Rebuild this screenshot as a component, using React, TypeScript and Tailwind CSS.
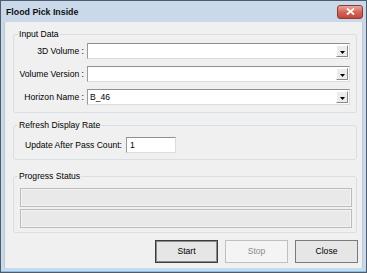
import React from 'react';

const font = { fontFamily: '"Liberation Sans", Arial, sans-serif' };

function ComboBox({ value }: { value?: string }) {
  return (
    <div className="flex h-[16px] flex-1 items-stretch border border-t-[#8e8f8f] border-l-[#9a9a9a] border-r-[#dcdcdc] border-b-[#dcdcdc] bg-white">
      <div className="flex flex-1 items-center pl-[2px] text-[8.6px] leading-none text-black">{value}</div>
      <div className="my-[1px] mr-[1px] flex w-[12px] items-center justify-center border border-t-white border-l-white border-r-[#8a8a8a] border-b-[#8a8a8a] bg-[#ececec]">
        <svg width="5" height="3" viewBox="0 0 5 3" className="mt-[2px]">
          <path d="M0 0h5L2.5 3z" fill="#000" />
        </svg>
      </div>
    </div>
  );
}

function Group({ title, className, children }: { title: string; className?: string; children: React.ReactNode }) {
  return (
    <fieldset className={`mr-[5px] ml-[8px] rounded-[3px] border border-[#d5dfe5] ${className ?? ''}`}>
      <legend className="ml-[4px] px-[1px] text-[8.6px] leading-[11px] text-black">{title}</legend>
      {children}
    </fieldset>
  );
}

function Field({ label, value }: { label: string; value?: string }) {
  return (
    <div className="flex items-center pr-[6px]">
      <div className="w-[70px] text-right text-[8.6px] leading-none whitespace-nowrap text-black">{label}</div>
      <div className="ml-[3px] flex flex-1">
        <ComboBox value={value} />
      </div>
    </div>
  );
}

function Button({ label, disabled, primary }: { label: string; disabled?: boolean; primary?: boolean }) {
  const border = primary
    ? 'border-[#3c3c3c] shadow-[inset_0_0_0_1px_#8a8a8a]'
    : disabled
      ? 'border-[#bfbfbf]'
      : 'border-[#7a7a7a]';
  return (
    <button
      disabled={disabled}
      className={`flex h-[23px] w-[63px] items-center justify-center border text-[8.6px] ${border} ${
        disabled ? 'bg-[#f4f4f4] text-[#8d8d8d]' : 'bg-[#e6e6e6] text-black'
      }`}
    >
      {label}
    </button>
  );
}

export default function App() {
  return (
    <div style={font} className="flex h-[273px] w-[367px] flex-col border border-[#4e5c6c] bg-[#c9d9ea]">
      {/* title bar */}
      <div className="flex h-[21px] items-center justify-between pl-[5px] pr-[3px]">
        <span className="pt-[2px] text-[8.8px] font-bold text-[#111]">Flood Pick Inside</span>
        <div className="flex h-[14px] w-[26px] items-center justify-center rounded-[3px] border border-[#8b3b33] bg-gradient-to-b from-[#e9a699] via-[#d4665a] to-[#c2463a]">
          <svg width="9" height="7" viewBox="0 0 9 7">
            <path d="M1 0.5l7 6M8 0.5l-7 6" stroke="#fff" strokeWidth="1.8" />
          </svg>
        </div>
      </div>

      {/* client area */}
      <div className="mx-[3px] mb-[3px] flex flex-1 flex-col border-x border-[#b9c9da] bg-[#f0f0f0]">
        <Group title="Input Data" className="mt-[7px] pt-[3px] pb-[7px]">
          <div className="flex flex-col gap-[7px]">
            <Field label="3D Volume :" />
            <Field label="Volume Version :" />
            <Field label="Horizon Name :" value="B_46" />
          </div>
        </Group>

        <Group title="Refresh Display Rate" className="mt-[7px] pt-[6px] pb-[6px]">
          <div className="flex items-center pl-[11px]">
            <span className="text-[8.6px] leading-none text-black">Update After Pass Count:</span>
            <div className="ml-[4px] flex h-[16px] w-[50px] items-center border border-t-[#8e8f8f] border-l-[#9a9a9a] border-r-[#dcdcdc] border-b-[#dcdcdc] bg-white pl-[3px] text-[8.6px] leading-none">
              1
            </div>
          </div>
        </Group>

        <Group title="Progress Status" className="mt-[11px] pt-[6px] pb-[4px]">
          <div className="ml-[6px] mr-[4px] flex flex-col gap-[2px]">
            <div className="h-[19px] border border-[#bcbcbc] bg-[#e9e9e9] shadow-[inset_0_0_0_1px_#f4f4f4]" />
            <div className="h-[19px] border border-[#bcbcbc] bg-[#e9e9e9] shadow-[inset_0_0_0_1px_#f4f4f4]" />
          </div>
        </Group>

        <div className="mt-[7px] mr-[4px] flex justify-end gap-[7px]">
          <Button label="Start" primary />
          <Button label="Stop" disabled />
          <Button label="Close" />
        </div>
      </div>
      <div className="h-0 border-b border-[#7cc3ea]" />
    </div>
  );
}
